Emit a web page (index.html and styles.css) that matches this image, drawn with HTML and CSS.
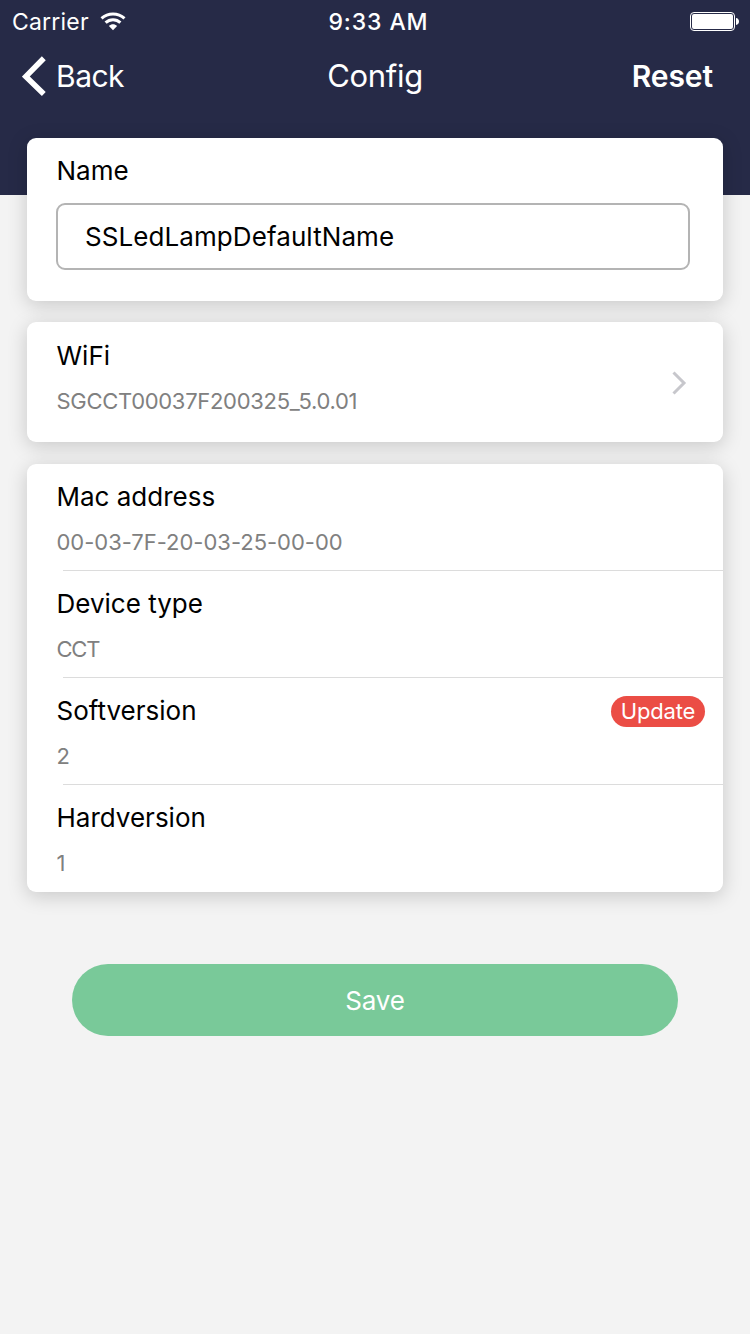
FILE: index.html
```html
<!DOCTYPE html>
<html lang="en">
<head>
<meta charset="utf-8">
<title>Config</title>
<link rel="stylesheet" href="styles.css">
</head>
<body>
<header class="header">
  <div class="statusbar">
    <div class="carrier"><span class="carrier-name">Carrier</span>
      <svg class="wifi" width="26" height="20" viewBox="0 0 26 20"><path d="M1.500 6.400C8 .6 18 .6 24.500 6.400" fill="none" stroke="#fff" stroke-width="3"/><path d="M5.600 10.700c4.200-4 10.600-4 14.800 0" fill="none" stroke="#fff" stroke-width="3"/><path d="M8.900 14c2.400-2.200 5.800-2.200 8.200 0L13 18.300z" fill="#fff"/></svg>
    </div>
    <span class="time">9:33 AM</span>
    <svg class="battery" width="49" height="19" viewBox="0 0 49 19"><rect x=".5" y=".5" width="44" height="18" rx="3.5" fill="none" stroke="#fff"/><rect x="2" y="2" width="41" height="15" rx="2" fill="#fff"/><path d="M46 6c4 .3 4 6.700 0 7z" fill="#fff"/></svg>
  </div>
  <nav class="navbar">
    <a class="back"><svg width="25" height="40" viewBox="0 0 25 40"><path d="M21.800 2.300 3.800 20.500 21.800 38" fill="none" stroke="#fff" stroke-width="5.500"/></svg><span>Back</span></a>
    <h1 class="title">Config</h1>
    <a class="reset">Reset</a>
  </nav>
</header>
<main class="content">
  <section class="card name-card">
    <label class="label name-label">Name</label>
    <div class="field">SSLedLampDefaultName</div>
  </section>
  <section class="card wifi-card">
    <div>
      <div class="label">WiFi</div>
      <div class="value ssid">SGCCT00037F200325_5.0.01</div>
    </div>
    <svg class="chevron" width="16" height="26" viewBox="0 0 16 26"><path d="M2.500 2.500 13 13 2.500 23.500" fill="none" stroke="#c7c7cc" stroke-width="3"/></svg>
  </section>
  <section class="card info-card">
    <div class="row"><div class="label">Mac address</div><div class="value mac">00-03-7F-20-03-25-00-00</div></div>
    <div class="row"><div class="label">Device type</div><div class="value type">CCT</div></div>
    <div class="row"><div class="label split"><span>Softversion</span><span class="badge">Update</span></div><div class="value">2</div></div>
    <div class="row"><div class="label">Hardversion</div><div class="value">1</div></div>
  </section>
  <button class="save">Save</button>
</main>
</body>
</html>
```
FILE: styles.css
```css
* { box-sizing: border-box; }
body {
  margin: 0;
  min-height: 1334px;
  background: #f3f3f3;
  color: #000;
  font-family: Inter, "Liberation Sans", sans-serif;
}
.header { height: 195px; background: #262a47; color: #fff; }
.statusbar {
  display: grid;
  grid-template-columns: 1fr auto 1fr;
  align-items: center;
  height: 40px;
  padding: 3px 11px 0 12px;
}
.carrier { display: flex; align-items: center; gap: 11px; font-size: 23px; letter-spacing: .2px; }
.time { padding-left: 6px; font-size: 23px; font-weight: 500; letter-spacing: .9px; }
.battery { justify-self: end; }
.navbar {
  display: grid;
  grid-template-columns: 1fr auto 1fr;
  align-items: center;
  height: 72px;
  padding: 0 37px 0 22px;
}
.back { display: flex; align-items: center; gap: 9px; font-size: 30px; letter-spacing: -.5px; }
.title { margin: -2px 0 0; padding-left: 15px; font-size: 31px; font-weight: 400; letter-spacing: -.3px; }
.reset { justify-self: end; font-size: 30px; font-weight: 600; letter-spacing: -.1px; }
.content { display: flex; flex-direction: column; gap: 21px; margin-top: -57px; padding: 0 27px; }
.card {
  background: #fff;
  border-radius: 9px;
  box-shadow: 0 4px 20px rgba(0, 0, 0, .18);
}
.label { margin-left: -.5px; font-size: 26px; line-height: 34px; }
.value { margin: 13px 0 0 -.5px; color: #808080; font-size: 22px; line-height: 30px; letter-spacing: -.1px; }
.ssid { letter-spacing: -.3px; }
.mac { letter-spacing: -.02px; }
.type { letter-spacing: -1.2px; }
.name-card { height: 163px; padding: 16px 33px 0 30px; }
.name-label { display: block; }
.field {
  display: flex;
  align-items: center;
  height: 67px;
  margin: 15px 0 0 -1px;
  padding: 0 0 1px 27px;
  border: 2px solid #b4b4b4;
  border-radius: 9px;
  font-size: 26px;
  letter-spacing: .08px;
}
.wifi-card { display: flex; justify-content: space-between; align-items: flex-start; height: 120px; padding: 17px 36px 0 30px; }
.chevron { margin-top: 31px; }
.info-card { height: 428px; margin-top: 1px; }
.row { height: 107px; padding: 16px 18px 0 30px; }
.row + .row {
  position: relative;
}
.row + .row::before {
  content: "";
  position: absolute;
  top: -1px;
  right: 0;
  left: 36px;
  height: 1px;
  background: #dcdcdc;
}
.split { display: flex; justify-content: space-between; align-items: center; }
.badge {
  width: 94px;
  height: 31px;
  border-radius: 16px;
  background: #eb4d45;
  color: #fff;
  font-size: 22px;
  line-height: 31px;
  letter-spacing: -.2px;
  text-align: center;
}
.save {
  height: 72px;
  margin: 51px 45px 0;
  border: 0;
  border-radius: 36px;
  background: #79c999;
  color: #fff;
  font-family: inherit;
  font-size: 26px;
  letter-spacing: -.2px;
}
```
